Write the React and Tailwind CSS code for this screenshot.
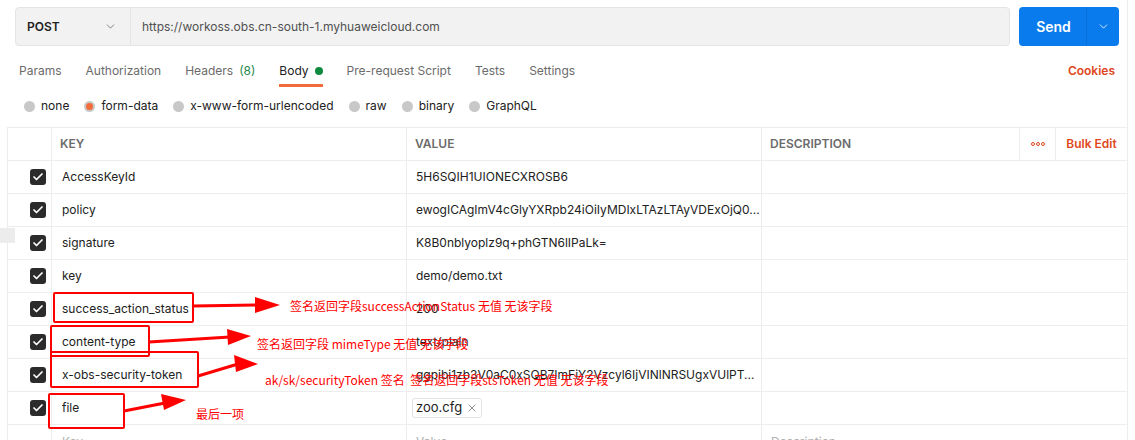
import { ChevronDown, Check, X } from "lucide-react";

const rows = [
  { key: "AccessKeyId", value: "5H6SQIH1UIONECXROSB6" },
  { key: "policy", value: "ewogICAgImV4cGlyYXRpb24iOiIyMDIxLTAzLTAyVDExOjQ0..." },
  { key: "signature", value: "K8B0nblyoplz9q+phGTN6lIPaLk=" },
  { key: "key", value: "demo/demo.txt" },
  { key: "success_action_status", value: "200" },
  { key: "content-type", value: "text/plain" },
  { key: "x-obs-security-token", value: "ggpibi1zb3V0aC0xSQB7ImFiY2Vzcyl6IjVINlNRSUgxVUlPT..." },
  { key: "file", file: "zoo.cfg" },
];

const tabs = [
  { label: "Params" },
  { label: "Authorization" },
  { label: "Headers", count: "(8)" },
  { label: "Body", active: true },
  { label: "Pre-request Script" },
  { label: "Tests" },
  { label: "Settings" },
];

const bodyTypes = ["none", "form-data", "x-www-form-urlencoded", "raw", "binary", "GraphQL"];

function Checkbox() {
  return (
    <div className="w-4 h-4 rounded-[3px] bg-[#2b2b2b] flex items-center justify-center">
      <Check size={12} strokeWidth={3.5} className="text-white" />
    </div>
  );
}

export default function App() {
  return (
    <div className="relative w-[1135px] h-[440px] overflow-hidden bg-white text-[#212121] text-[12px] font-['Inter',sans-serif]">
      <div className="absolute left-0 top-[228px] w-[15px] h-[15px] bg-[#ececec]" />
      <div className="w-[1128px] h-full border-r border-[#ededed] pl-[7px]">
        {/* url bar */}
        <div className="flex items-center pt-[7px] pl-[8px] pr-[8px]">
          <div className="flex flex-1 h-[39px] bg-[#f2f2f2] border border-[#e4e4e4] rounded-[4px]">
            <div className="w-[115px] flex items-center justify-between pl-[11px] pr-[13px] border-r border-[#e4e4e4]">
              <span className="font-semibold text-[12px] text-[#212121]">POST</span>
              <ChevronDown size={13} strokeWidth={1.5} className="text-[#6b6b6b]" />
            </div>
            <div className="flex items-center pl-[11px] text-[12px] text-[#505050]">
              https://workoss.obs.cn-south-1.myhuaweicloud.com
            </div>
          </div>
          <div className="ml-[9px] flex h-[39px] w-[100px] bg-[#097bed] rounded-[4px] text-white">
            <div className="w-[67px] flex items-center justify-center font-semibold text-[14px] pl-[2px]">Send</div>
            <div className="flex-1 border-l border-[#0a6fd6] flex items-center justify-center">
              <ChevronDown size={13} strokeWidth={1.5} />
            </div>
          </div>
        </div>

        {/* tabs */}
        <div className="flex items-center h-[33px] mt-[8px] pl-[12px] pr-[12px]">
          <div className="flex gap-[24px]">
            {tabs.map((t) => (
              <div key={t.label} className={`relative h-[33px] flex items-center text-[12px] ${t.active ? "text-[#212121]" : "text-[#6b6b6b]"}`}>
                {t.label}
                {t.count && <span className="ml-[6px] text-[#1f8a4c]">{t.count}</span>}
                {t.active && <span className="ml-[6px] w-[8px] h-[8px] rounded-full bg-[#0e8a3e]" />}
                {t.active && <span className="absolute left-0 right-0 bottom-0 h-[3px] bg-[#f26b3a]" />}
              </div>
            ))}
          </div>
          <div className="ml-auto font-semibold text-[#e0461c]">Cookies</div>
        </div>

        {/* body types */}
        <div className="flex items-center h-[38px] pl-[17px] gap-[15px]">
          {bodyTypes.map((b) => (
            <div key={b} className="flex items-center gap-[6px] text-[12px] text-[#212121]">
              <span className="w-[11px] h-[11px] rounded-full flex items-center justify-center bg-[#c8c8c8]">
                {b === "form-data" && <span className="w-[7px] h-[7px] rounded-full bg-[#f26b3a]" />}
              </span>
              {b}
            </div>
          ))}
        </div>

        {/* table */}
        <div className="mt-[2px] border-t border-l border-[#ededed]">
          <div className="grid grid-cols-[44px_355px_355px_1fr] h-[33px] border-b border-[#ededed] text-[12px] font-semibold text-[#6b6b6b]">
            <div className="border-r border-[#ededed]" />
            <div className="border-r border-[#ededed] flex items-center pl-[8px]">KEY</div>
            <div className="border-r border-[#ededed] flex items-center pl-[8px]">VALUE</div>
            <div className="flex">
              <div className="flex-1 flex items-center pl-[8px] border-r border-[#ededed]">DESCRIPTION</div>
              <div className="w-[36px] flex items-center justify-center gap-[1px] border-r border-[#ededed]">
                <span className="w-[4px] h-[4px] rounded-full border border-[#e0461c]" />
                <span className="w-[4px] h-[4px] rounded-full border border-[#e0461c]" />
                <span className="w-[4px] h-[4px] rounded-full border border-[#e0461c]" />
              </div>
              <div className="w-[71px] flex items-center justify-center text-[#e0461c]">Bulk Edit</div>
            </div>
          </div>
          {rows.map((r) => (
            <div key={r.key} className="grid grid-cols-[44px_355px_355px_1fr] h-[33px] border-b border-[#ededed] text-[12px]">
              <div className="border-r border-[#ededed] flex items-center justify-end pr-[5px]">
                <Checkbox />
              </div>
              <div className="border-r border-[#ededed] flex items-center pl-[10px]">{r.key}</div>
              <div className="border-r border-[#ededed] flex items-center pl-[9px]">
                {r.file ? (
                  <span className="ml-[-4px] flex items-center gap-[4px] h-[20px] pl-[3px] pr-[3px] border border-[#e4e4e4] rounded-[3px] text-[13px]">
                    {r.file}
                    <X size={12} strokeWidth={1.5} className="text-[#6b6b6b]" />
                  </span>
                ) : (
                  r.value
                )}
              </div>
              <div />
            </div>
          ))}
          <div className="grid grid-cols-[44px_355px_355px_1fr] h-[33px] text-[12px] text-[#b0b0b0]">
            <div className="border-r border-[#ededed]" />
            <div className="border-r border-[#ededed] flex items-center pl-[10px]">Key</div>
            <div className="border-r border-[#ededed] flex items-center pl-[9px]">Value</div>
            <div className="flex items-center pl-[9px]">Description</div>
          </div>
        </div>
      </div>

      {/* annotations */}
      <div className="absolute left-[53px] top-[292px] w-[141px] h-[31px] border-2 border-[#ff0000] rounded-[2px]" />
      <div className="absolute left-[50px] top-[325px] w-[100px] h-[32px] border-2 border-[#ff0000] rounded-[2px]" />
      <div className="absolute left-[50px] top-[351px] w-[149px] h-[37px] border-2 border-[#ff0000] rounded-[2px]" />
      <div className="absolute left-[48px] top-[393px] w-[77px] h-[36px] border-2 border-[#ff0000] rounded-[2px]" />
      <svg className="absolute left-0 top-0" width="1135" height="440">
        <g stroke="#ff0000" strokeWidth="3" fill="none">
          <line x1="193" y1="306" x2="258" y2="305" />
          <line x1="149" y1="342" x2="230" y2="337" />
          <line x1="198" y1="376" x2="238" y2="364" />
          <line x1="124" y1="411" x2="165" y2="403" />
        </g>
        <g fill="#ff0000">
          <polygon points="255,297 280,305 255,313" />
          <polygon points="227,329 251,336 228,345" />
          <polygon points="234,355 258,364 236,372" />
          <polygon points="161,394 186,400 164,410" />
        </g>
      </svg>
      <div className="absolute left-[290px] top-[298px] text-[12px] leading-[16px] text-[#ff0000] whitespace-pre font-['Noto_Sans_CJK_SC',sans-serif]">
        签名返回字段successActionStatus 无值 无该字段
      </div>
      <div className="absolute left-[257px] top-[336px] text-[12px] leading-[16px] text-[#ff0000] whitespace-pre font-['Noto_Sans_CJK_SC',sans-serif]">
        签名返回字段 mimeType 无值 无该字段
      </div>
      <div className="absolute left-[265px] top-[372px] text-[12px] leading-[16px] text-[#ff0000] whitespace-pre font-['Noto_Sans_CJK_SC',sans-serif]">
        ak/sk/securityToken 签名  签名返回字段stsToken 无值 无该字段
      </div>
      <div className="absolute left-[196px] top-[406px] text-[12px] leading-[16px] text-[#ff0000] whitespace-pre font-['Noto_Sans_CJK_SC',sans-serif]">
        最后一项
      </div>
    </div>
  );
}
